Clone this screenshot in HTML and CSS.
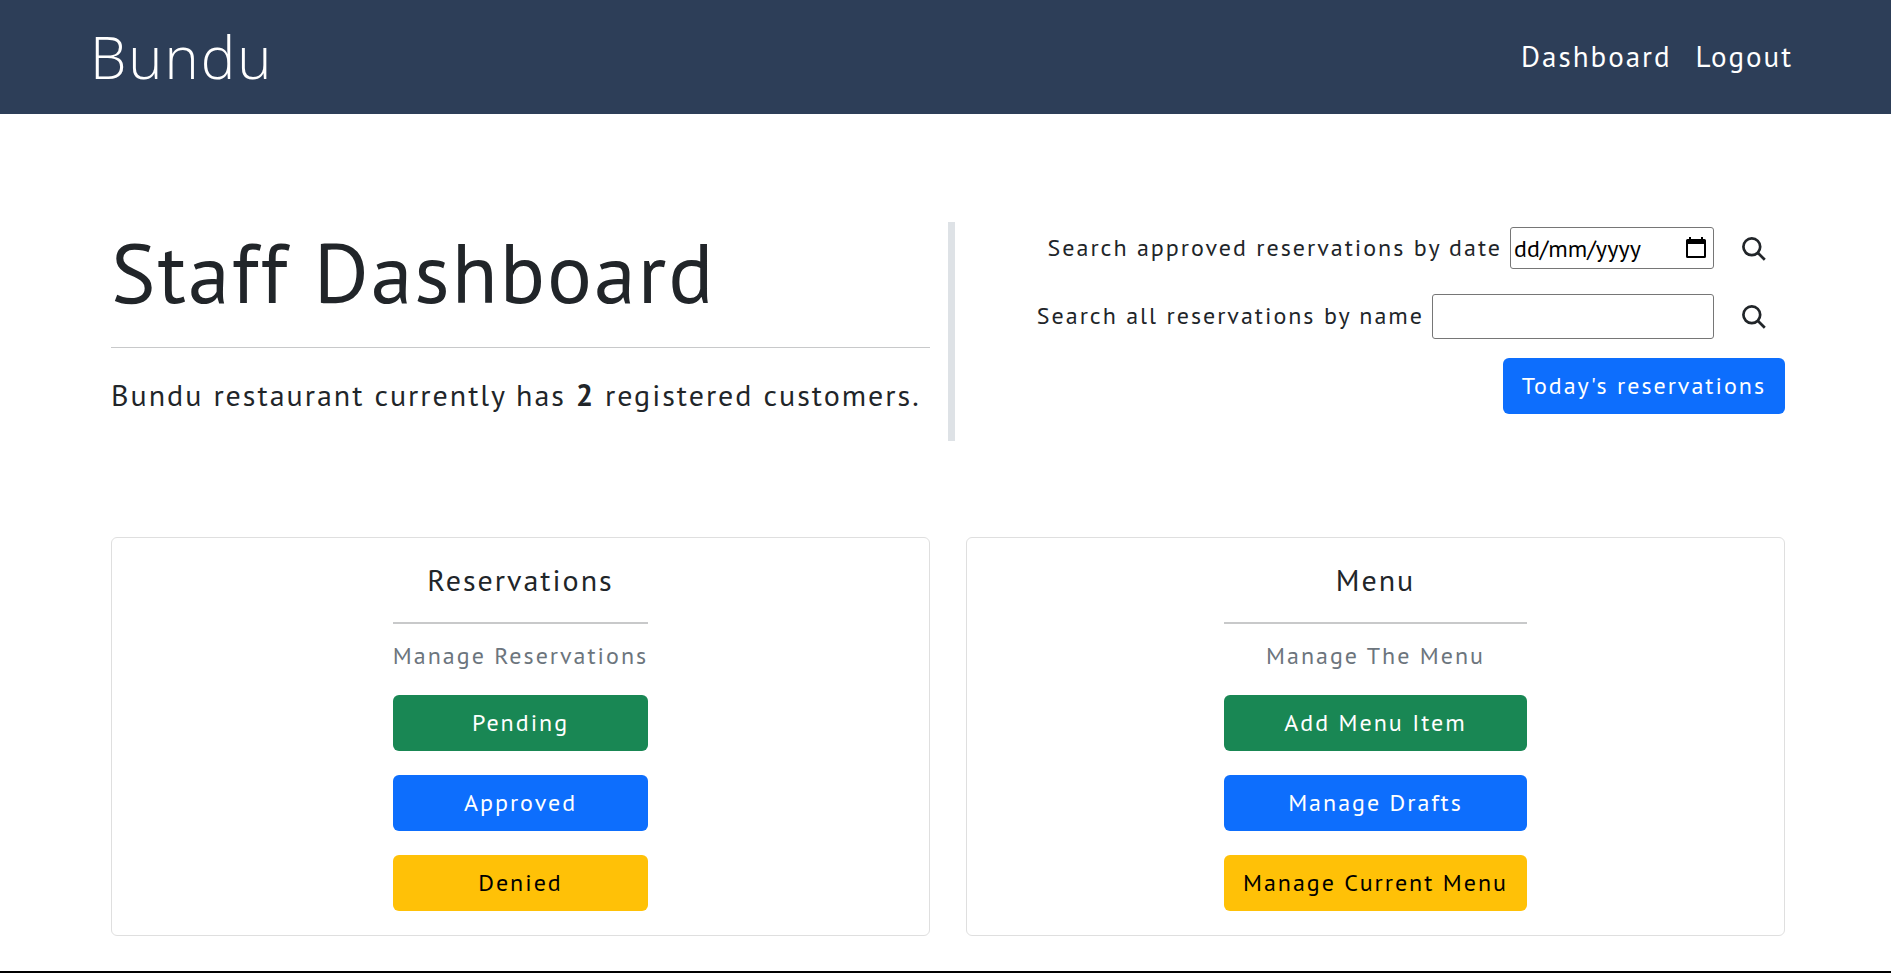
FILE: index.html
```html
<!DOCTYPE html>
<html lang="en">
<head>
<meta charset="utf-8">
<title>Bundu | Staff Dashboard</title>
<link rel="stylesheet" href="styles.css">
</head>
<body>
<header class="navbar">
  <a class="brand" href="#">Bundu</a>
  <nav class="nav-links">
    <a href="#">Dashboard</a>
    <a href="#">Logout</a>
  </nav>
</header>
<main class="container">
  <section class="row">
    <div class="intro">
      <h1>Staff Dashboard</h1>
      <hr class="rule">
      <p class="lead">Bundu restaurant currently has <strong>2</strong> registered customers.</p>
    </div>
    <div class="search">
      <form class="search-row">
        <label for="date">Search approved reservations by date</label>
        <span class="date-field">
          <input class="field" id="date" type="text" placeholder="dd/mm/yyyy">
          <svg class="calendar" viewBox="0 0 20 22" aria-hidden="true"><path fill-rule="evenodd" d="M3 0h2v2h10V0h2v2h1.500a1.500 1.500 0 0 1 1.500 1.500v16a1.500 1.500 0 0 1-1.500 1.500h-17A1.500 1.500 0 0 1 0 19.500v-16A1.500 1.500 0 0 1 1.500 2H3zM2 7v12h16V7z"/></svg>
        </span>
        <button class="icon-btn" type="submit" aria-label="Search by date"><svg viewBox="0 0 24 24"><circle cx="9.800" cy="9.800" r="8.400"/><path d="M15.800 15.800l7 7"/></svg></button>
      </form>
      <form class="search-row">
        <label for="name">Search all reservations by name</label>
        <input class="field name-field" id="name" type="text">
        <button class="icon-btn" type="submit" aria-label="Search by name"><svg viewBox="0 0 24 24"><circle cx="9.800" cy="9.800" r="8.400"/><path d="M15.800 15.800l7 7"/></svg></button>
      </form>
      <a class="btn btn-primary" href="#">Today's reservations</a>
    </div>
  </section>
  <section class="row cards">
    <div class="col">
      <article class="card">
        <div class="card-body">
          <h2>Reservations</h2>
          <hr class="rule rule-thick">
          <p class="subtitle">Manage Reservations</p>
          <a class="btn btn-success" href="#">Pending</a>
          <a class="btn btn-primary" href="#">Approved</a>
          <a class="btn btn-warning" href="#">Denied</a>
        </div>
      </article>
    </div>
    <div class="col">
      <article class="card">
        <div class="card-body">
          <h2>Menu</h2>
          <hr class="rule rule-thick">
          <p class="subtitle">Manage The Menu</p>
          <a class="btn btn-success" href="#">Add Menu Item</a>
          <a class="btn btn-primary" href="#">Manage Drafts</a>
          <a class="btn btn-warning" href="#">Manage Current Menu</a>
        </div>
      </article>
    </div>
  </section>
</main>
<footer class="footer"></footer>
</body>
</html>
```
FILE: styles.css
```css
* { box-sizing: border-box; }
body {
  margin: 0;
  background: #fff;
  color: #212529;
  font-family: "PT Sans", Lato, sans-serif;
  font-size: 24px;
  line-height: 36px;
  letter-spacing: 2px;
}
h1, h2, p { margin: 0; font-weight: 400; }
a { color: inherit; text-decoration: none; }
.navbar {
  display: flex;
  align-items: center;
  justify-content: space-between;
  height: 114px;
  padding: 0 98px 0 90px;
  background: #2d3e58;
  color: #fff;
}
.brand {
  font-family: "Open Sans", sans-serif;
  font-size: 58px;
  font-weight: 300;
  line-height: 72px;
}
.nav-links {
  display: flex;
  gap: 24px;
  padding-bottom: 2px;
  font-size: 29px;
}
.container { padding: 108px 88px 0 93px; }
.row { display: grid; grid-template-columns: 1fr 1fr; }
.intro, .col { padding: 0 18px; }
h1 { padding-bottom: 2px; font-size: 84px; line-height: 99px; }
.rule { height: 1px; margin: 24px 0; border: 0; background: #c8c9ca; }
.rule-thick { height: 2px; margin-bottom: 14px; }
.lead { margin-bottom: 24px; font-size: 30px; line-height: 45px; }
.search {
  display: flex;
  flex-direction: column;
  align-items: flex-end;
  gap: 12px;
  padding-right: 18px;
  border-left: 7px solid #dee2e6;
}
.search-row { display: flex; align-items: center; }
.search-row label { padding-bottom: 4px; }
.field {
  height: 42px;
  width: 204px;
  margin-bottom: 4px;
  padding: 0 3px;
  border: 1px solid #767676;
  border-radius: 3px;
  background: #fff;
  color: #000;
  font: inherit;
  letter-spacing: normal;
}
.field::placeholder { color: #000; opacity: 1; }
.name-field { width: 282px; height: 45px; margin-left: 8px; }
.date-field { position: relative; margin-left: 8px; }
.date-field .field { display: block; }
.calendar { position: absolute; top: 10px; right: 8px; width: 20px; height: 22px; }
.icon-btn {
  display: block;
  height: 56px;
  margin-left: 9px;
  padding: 0 19px 2px;
  border: 0;
  background: none;
}
.icon-btn svg {
  display: block;
  width: 24px;
  height: 24px;
  fill: none;
  stroke: #212529;
  stroke-width: 2.7;
}
.btn {
  display: block;
  padding: 10px 19px;
  border-radius: 6px;
  text-align: center;
}
.btn-primary { background: #0d6efd; color: #fff; }
.btn-success { background: #198754; color: #fff; }
.btn-warning { background: #ffc107; color: #000; }
.cards { margin-top: 96px; }
.card {
  display: flex;
  justify-content: center;
  padding: 24px;
  border: 1px solid #dfdfdf;
  border-radius: 6px;
}
.card-body { text-align: center; }
.card h2 { font-size: 30px; }
.subtitle { color: #6c757d; margin-bottom: 22px; line-height: 35px; }
.card .btn + .btn { margin-top: 24px; }
.footer { min-height: 2px; margin-top: 35px; background: #000; }
```
